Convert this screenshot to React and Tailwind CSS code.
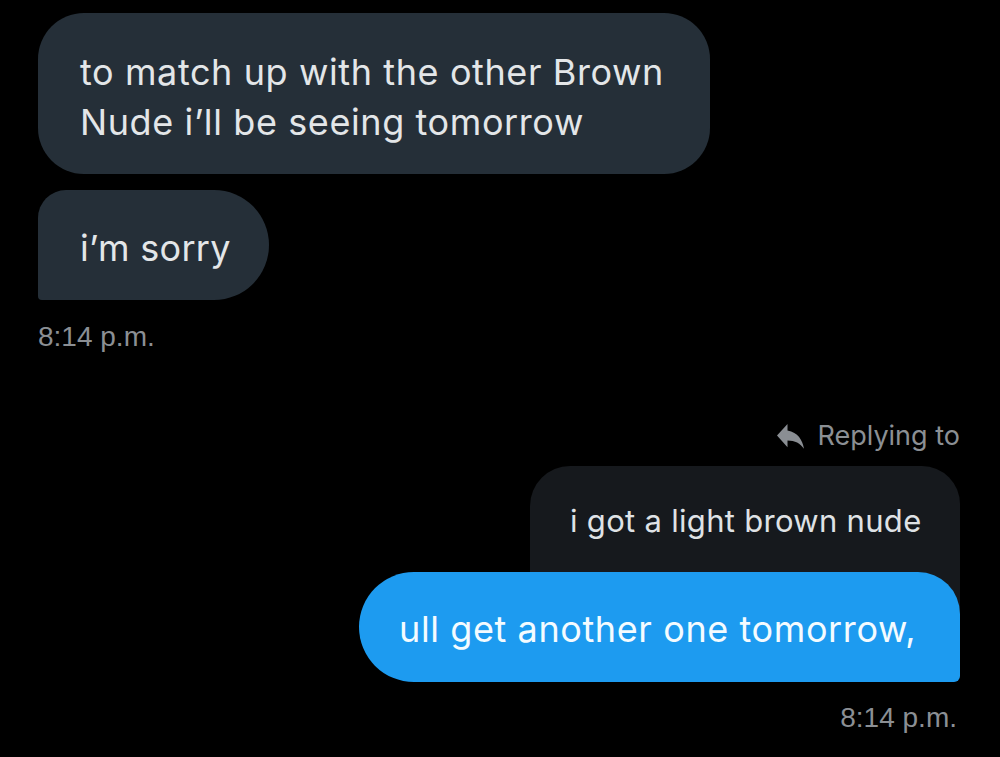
import React from "react";

function ReplyIcon() {
  return (
    <svg width="27" height="25" viewBox="3 4 18 15.1" preserveAspectRatio="none" fill="#8a8e93">
      <path d="M10 8V4l-7 7 7 7v-4.1c5 0 8.5 1.6 11 5.1-1-5-4-10-11-11z" />
    </svg>
  );
}

export default function App() {
  return (
    <div className="relative w-[1000px] h-[757px] bg-black overflow-hidden font-['Inter',sans-serif]">
      <div className="flex flex-col items-start pl-[38px] pt-[13px]">
        <div className="flex h-[161px] w-[672px] flex-col justify-center rounded-[46px] bg-[#252f38] pl-[42px] pt-[7px] text-[36px] leading-[50px] tracking-[0.6px] text-[#e3e6e8]">
          <span className="whitespace-nowrap">to match up with the other Brown</span>
          <span className="whitespace-nowrap">Nude i’ll be seeing tomorrow</span>
        </div>
        <div className="mt-[16px] flex h-[110px] w-[231px] items-center rounded-tl-[28px] rounded-tr-[55px] rounded-br-[55px] rounded-bl-[4px] bg-[#252f38] pl-[42px] pt-[5px] text-[36px] tracking-[0.3px] text-[#e3e6e8]">
          <span className="whitespace-nowrap">i’m sorry</span>
        </div>
        <div className="mt-[21px] h-[32px] font-['Liberation_Sans',sans-serif] text-[28px] leading-[32px] text-[#8b8f94]">
          8:14 p.m.
        </div>
      </div>

      <div className="mt-[67px] flex flex-col items-end pr-[40px]">
        <div className="flex h-[32px] items-center gap-[13px] text-[27px] leading-[32px] text-[#8b8f94]">
          <ReplyIcon />
          <span>Replying to</span>
        </div>
        <div className="mt-[14px] h-[154px] w-[430px] rounded-tl-[40px] rounded-tr-[38px] bg-[#16191d] pl-[40px] pt-[37px] text-[31px] leading-[36px] tracking-[0.3px] text-[#dfe2e5]">
          <span className="whitespace-nowrap">i got a light brown nude</span>
        </div>
        <div className="relative -mt-[48px] flex h-[110px] w-[601px] items-center rounded-l-[55px] rounded-tr-[42px] rounded-br-[6px] bg-[#1d9bf0] pl-[40px] pt-[4px] text-[36px] tracking-[0.6px] text-[#f4fbff]">
          <span className="whitespace-nowrap">ull get another one tomorrow,</span>
        </div>
        <div className="mt-[20px] mr-[3px] h-[32px] font-['Liberation_Sans',sans-serif] text-[28px] leading-[32px] text-[#8b8f94]">
          8:14 p.m.
        </div>
      </div>
    </div>
  );
}
